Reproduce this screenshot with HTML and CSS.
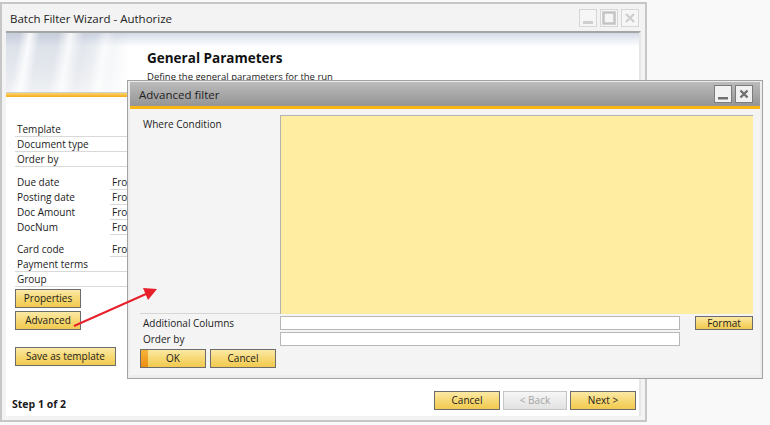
FILE: index.html
```html
<!DOCTYPE html>
<html>
<head>
    <meta charset="utf-8" />
    <title>Batch Filter Wizard - Authorize</title>
    <link rel="stylesheet" href="styles.css">
</head>
<body>
<div class="desk">
    <div class="wizard">
        <div class="wz-title">
            <span class="wz-caption">Batch Filter Wizard - Authorize</span>
            <div class="ctl-group">
                <span class="ctl"><svg width="16" height="16" viewBox="0 0 16 16"><rect x="3" y="11" width="10" height="3" fill="#cfcfcf"/></svg></span>
                <span class="ctl"><svg width="16" height="16" viewBox="0 0 16 16"><rect x="2.5" y="2.5" width="11" height="11" fill="none" stroke="#c4c4c4" stroke-width="2.5"/></svg></span>
                <span class="ctl"><svg width="16" height="16" viewBox="0 0 16 16"><path d="M4 4 L12 12 M12 4 L4 12" stroke="#cfcfcf" stroke-width="2.2"/></svg></span>
            </div>
        </div>
        <div class="wz-frame">
            <div class="wz-head">
                <div class="wz-art"></div>
                <div class="wz-head-text">
                    <div class="wz-h1">General Parameters</div>
                    <div class="wz-h2">Define the general parameters for the run</div>
                </div>
            </div>
            <div class="wz-head-line"></div>

            <div class="wz-form">
                <div class="row lined"><span class="lbl">Template</span><span class="fld"></span></div>
                <div class="row lined"><span class="lbl">Document type</span><span class="fld"></span></div>
                <div class="row lined"><span class="lbl">Order by</span><span class="fld"></span></div>

                <div class="group">
                    <div class="row"><span class="lbl">Due date</span><span class="fld ul">From</span></div>
                    <div class="row"><span class="lbl">Posting date</span><span class="fld ul">From</span></div>
                    <div class="row"><span class="lbl">Doc Amount</span><span class="fld ul">From</span></div>
                    <div class="row"><span class="lbl">DocNum</span><span class="fld ul">From</span></div>
                </div>

                <div class="group">
                    <div class="row"><span class="lbl">Card code</span><span class="fld ul">From</span></div>
                    <div class="row lined"><span class="lbl">Payment terms</span><span class="fld"></span></div>
                    <div class="row lined"><span class="lbl">Group</span><span class="fld"></span></div>
                </div>

                <div class="side-btns">
                    <a href="javascript:;" class="btn w65">Properties</a>
                    <a href="javascript:;" class="btn w65">Advanced</a>
                    <a href="javascript:;" class="btn w100 save">Save as template</a>
                </div>
            </div>

            <div class="wz-foot">
                <span class="step">Step 1 of 2</span>
                <a href="javascript:;" class="btn w65">Cancel</a>
                <a href="javascript:;" class="btn w63 off">&lt; Back</a>
                <a href="javascript:;" class="btn w65">Next &gt;</a>
            </div>
        </div>
    </div>

    <div class="dialog">
        <div class="dlg-title">
            <span class="dlg-caption">Advanced filter</span>
            <span class="dctl"><svg width="16" height="16" viewBox="0 0 16 16"><rect x="3" y="11" width="10" height="2.5" fill="#6f6f6f"/></svg></span>
            <span class="dctl"><svg width="16" height="16" viewBox="0 0 16 16"><path d="M4.5 4.5 L11.5 11.5 M11.5 4.5 L4.5 11.5" stroke="#6f6f6f" stroke-width="2.4"/></svg></span>
        </div>
        <div class="dlg-line"></div>
        <div class="dlg-body">
            <div class="dlg-grid">
                <span class="where-lbl">Where Condition</span>
                <div class="where-box"></div>

                <span class="lbl2">Additional Columns</span>
                <div class="inp"></div>
                <a href="javascript:;" class="btn fmt">Format</a>

                <span class="lbl2">Order by</span>
                <div class="inp"></div>
            </div>
            <div class="dlg-btns">
                <a href="javascript:;" class="btn w65 ok"><i class="ok-bar"></i>OK</a>
                <a href="javascript:;" class="btn w65">Cancel</a>
            </div>
        </div>
    </div>

    <svg class="arrow" width="770" height="425" viewBox="0 0 770 425">
        <line x1="74" y1="326" x2="146" y2="294" stroke="#e8202a" stroke-width="2"/>
        <polygon points="157,289 143,288 148,300" fill="#e8202a"/>
    </svg>
</div>
</body>
</html>
```

FILE: styles.css
```css
* {
    margin: 0;
    padding: 0;
    box-sizing: border-box;
    text-decoration: none;
}

body {
    font-family: "Open Sans", "Liberation Sans", sans-serif;
    font-size: 10px;
    color: #1b1b1b;
    background: #f9f9f9;
}

.desk {
    position: relative;
    width: 770px;
    height: 425px;
    overflow: hidden;
    padding-top: 2px;
}

/* main wizard window */
.wizard {
    width: 647px;
    height: 420px;
    border: 2px solid #c6c6c6;
    background: #f3f3f3;
    padding: 0 4px 4px 4px;
    display: flex;
    flex-direction: column;
}

.wz-title {
    height: 27px;
    display: flex;
    align-items: center;
    padding: 1px 0 0 4px;
}

.wz-caption {
    flex: 1;
    font-size: 11.5px;
    color: #222;
}

.ctl-group {
    display: flex;
    gap: 3px;
    margin-right: 2px;
}

.ctl {
    width: 18px;
    height: 18px;
    border: 1px solid #d6d6d6;
    background: #f6f6f6;
    display: flex;
    align-items: center;
    justify-content: center;
}

.wz-frame {
    flex: 1;
    background: #fff;
    border-top: 2px solid #a5a5a5;
    border-right: 2px solid #e6e6e6;
    display: flex;
    flex-direction: column;
}

.wz-head {
    height: 59px;
    display: flex;
    background: linear-gradient(#d3d9e5, #e9edf3 6px, #fff 14px);
}

.wz-art {
    width: 124px;
    background:
        linear-gradient(100deg, transparent 0 14px, rgba(255,255,255,.85) 24px, transparent 34px, transparent 52px, rgba(255,255,255,.8) 64px, transparent 78px, transparent 90px, rgba(255,255,255,.7) 100px, transparent 110px),
        linear-gradient(#c5cdda, #dde2ea 14px, #e6e9ee 40px, #eff1f4),
        #e6e9ee;
    -webkit-mask-image: linear-gradient(to right, #000 55%, transparent);
    mask-image: linear-gradient(to right, #000 55%, transparent);
}

.wz-head-text {
    padding: 16px 0 0 17px;
}

.wz-h1 {
    font-size: 13.5px;
    font-weight: bold;
    color: #111;
}

.wz-h2 {
    margin-top: 3px;
    font-size: 9.5px;
}

.wz-head-line {
    height: 5px;
    background: linear-gradient(#d0d0d0 0 1px, #fbd36a 1px, #f4ae1c);
}

.wz-form {
    flex: 1;
    padding: 25px 0 0 9px;
}

.row {
    display: grid;
    grid-template-columns: 95px 1fr;
    height: 15px;
    line-height: 14px;
}

.row.lined {
    border-bottom: 1px solid #d9d9d9;
}

.lbl {
    padding-left: 2px;
}

.fld.ul {
    border-bottom: 1px solid #d9d9d9;
    padding-left: 2px;
}

.group {
    margin-top: 8px;
}

.group + .group {
    margin-top: 7px;
}

.side-btns {
    display: flex;
    flex-direction: column;
    align-items: flex-start;
    gap: 3px;
    margin-top: 2px;
}

.side-btns .save {
    margin-top: 14px;
}

.btn {
    display: block;
    height: 19px;
    line-height: 17px;
    border: 1px solid #6c6c6c;
    background: linear-gradient(#fbe9a6, #f6d874 50%, #f1ca4f);
    color: #1b1b1b;
    text-align: center;
    font-size: 10px;
}

.w65 { width: 66px; }
.w63 { width: 64px; }
.w100 { width: 101px; }

.btn.off {
    border-color: #c5c5c5;
    background: linear-gradient(#f6f6f6, #e2e2e2);
    color: #a3a3a3;
}

.wz-foot {
    display: flex;
    align-items: center;
    gap: 3px;
    padding: 0 3px 5px 6px;
}

.step {
    flex: 1;
    font-weight: bold;
    font-size: 10.5px;
    margin-top: 7px;
}

/* advanced filter dialog, lying over the wizard */
.dialog {
    position: absolute;
    left: 127px;
    top: 80px;
    width: 636px;
    height: 299px;
    border: 1px solid #a2a2a2;
    background: #ededed;
    padding: 1px 2px 3px 2px;
    display: flex;
    flex-direction: column;
}

.dlg-title {
    height: 24px;
    display: flex;
    align-items: center;
    gap: 3px;
    padding: 0 7px 0 9px;
    background: linear-gradient(#bcbcbc, #a4a4a4 60%, #959595);
}

.dlg-caption {
    flex: 1;
    font-size: 11.5px;
    color: #1e1e1e;
}

.dctl {
    width: 18px;
    height: 18px;
    border: 1px solid #7b7b7b;
    background: #f1f1f1;
    display: flex;
    align-items: center;
    justify-content: center;
}

.dlg-line {
    height: 3px;
    background: #fab614;
}

.dlg-body {
    flex: 1;
    background: #f4f4f4;
    padding: 6px 7px 0 10px;
}

.dlg-grid {
    display: grid;
    grid-template-columns: 140px 400px 1fr;
    row-gap: 2px;
}

.where-lbl {
    border-bottom: 1px solid #d6d6d6;
    padding: 2px 0 0 3px;
}

.where-box {
    grid-column: span 2;
    height: 199px;
    background: #ffeea2;
    border-top: 1px solid #b2b2b2;
    border-left: 1px solid #b2b2b2;
}

.lbl2 {
    padding-left: 3px;
    line-height: 14px;
}

.inp {
    height: 14px;
    background: #fff;
    border: 1px solid #b7b7b7;
}

.btn.fmt {
    justify-self: end;
    width: 58px;
    height: 14px;
    line-height: 12px;
}

.dlg-btns {
    display: flex;
    gap: 4px;
    margin-top: 3px;
}

.btn.ok {
    position: relative;
}

.ok-bar {
    position: absolute;
    left: 0;
    top: 0;
    bottom: 0;
    width: 7px;
    background: linear-gradient(#f6b23a, #ec8f12);
}

.arrow {
    position: absolute;
    left: 0;
    top: 0;
}
```
